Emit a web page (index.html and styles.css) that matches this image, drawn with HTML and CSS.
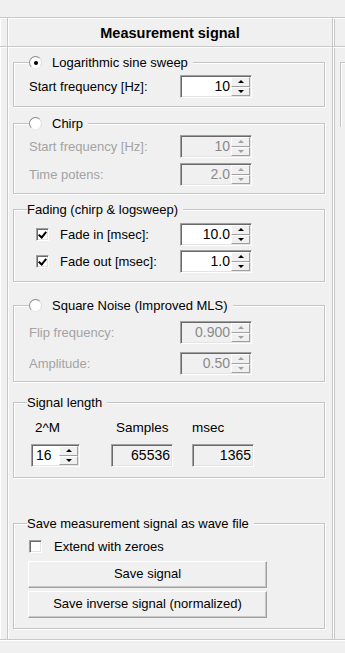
FILE: index.html
```html
<!DOCTYPE html>
<html>
<head>
<meta charset="utf-8">
<link rel="stylesheet" href="styles.css">
</head>
<body>
<div class="top"></div>
<div class="grid">
  <div class="cell cl"></div>
  <div class="cell cm head">Measurement signal</div>
  <div class="cell cr"></div>

  <div class="cell cl"></div>
  <div class="cell cm body">
    <fieldset class="grp g1">
      <legend><span class="lg"><span class="radio on"></span>Logarithmic sine sweep</span></legend>
      <div class="rows">
        <div class="row"><span class="lbl">Start frequency [Hz]:</span>
          <div class="spin"><div class="val">10</div><div class="btns"><span class="up"></span><span class="dn"></span></div></div>
        </div>
      </div>
    </fieldset>

    <fieldset class="grp g2">
      <legend><span class="lg"><span class="radio"></span>Chirp</span></legend>
      <div class="rows">
        <div class="row dis"><span class="lbl">Start frequency [Hz]:</span>
          <div class="spin off"><div class="val">10</div><div class="btns"><span class="up"></span><span class="dn"></span></div></div>
        </div>
        <div class="row dis"><span class="lbl">Time potens:</span>
          <div class="spin off"><div class="val">2.0</div><div class="btns"><span class="up"></span><span class="dn"></span></div></div>
        </div>
      </div>
    </fieldset>

    <fieldset class="grp g3 txt">
      <legend><span class="lg">Fading (chirp &amp; logsweep)</span></legend>
      <div class="rows">
        <div class="row"><span class="chk on"></span><span class="lbl2">Fade in [msec]:</span>
          <div class="spin"><div class="val">10.0</div><div class="btns"><span class="up"></span><span class="dn"></span></div></div>
        </div>
        <div class="row"><span class="chk on"></span><span class="lbl2">Fade out [msec]:</span>
          <div class="spin"><div class="val">1.0</div><div class="btns"><span class="up"></span><span class="dn"></span></div></div>
        </div>
      </div>
    </fieldset>

    <fieldset class="grp g4">
      <legend><span class="lg"><span class="radio"></span>Square Noise (Improved MLS)</span></legend>
      <div class="rows">
        <div class="row dis"><span class="lbl">Flip frequency:</span>
          <div class="spin off"><div class="val">0.900</div><div class="btns"><span class="up"></span><span class="dn"></span></div></div>
        </div>
        <div class="row dis"><span class="lbl">Amplitude:</span>
          <div class="spin off"><div class="val">0.50</div><div class="btns"><span class="up"></span><span class="dn"></span></div></div>
        </div>
      </div>
    </fieldset>

    <fieldset class="grp g5 txt">
      <legend><span class="lg">Signal length</span></legend>
      <div class="slgrid">
        <span class="h1">2^M</span>
        <span class="h2">Samples</span>
        <span class="h3">msec</span>
        <div class="spin small"><div class="val left">16</div><div class="btns"><span class="up"></span><span class="dn"></span></div></div>
        <div class="box">65536</div>
        <div class="box">1365</div>
      </div>
    </fieldset>

    <fieldset class="grp g6 txt">
      <legend><span class="lg">Save measurement signal as wave file</span></legend>
      <div class="row crow"><span class="chk"></span><span>Extend with zeroes</span></div>
      <div class="btn b1">Save signal</div>
      <div class="btn b2">Save inverse signal (normalized)</div>
    </fieldset>
  </div>
  <div class="cell cr"><div class="stub"></div></div>
</div>
</body>
</html>
```

FILE: styles.css
```css
html, body {
  margin: 0;
  padding: 0;
  background: #f0f0f0;
}
body {
  width: 345px;
  height: 653px;
  overflow: hidden;
  font-family: "Liberation Sans", Arial, sans-serif;
  font-size: 13px;
  color: #000;
}
.top { height: 17px; }

.grid {
  display: grid;
  grid-template-columns: 8px 325px 12px;
  grid-template-rows: 29px 593px;
  border-top: 1px solid #c8c8c8;
  box-shadow: 0 1px 0 #fff;
}
.cell {
  box-sizing: border-box;
  border-right: 1px solid #c8c8c8;
  border-bottom: 1px solid #c8c8c8;
  box-shadow: inset 1px 1px 0 #fff;
}
.cr {
  border-right: none;
  box-shadow: inset 1px 1px 0 #fff, inset 2px 0 0 #c8c8c8;
}
.head {
  display: flex;
  align-items: center;
  justify-content: center;
  padding-top: 2px;
  font-weight: bold;
  font-size: 14.5px;
}
.body {
  padding: 8px 0 0 5px;
}

/* group boxes */
.grp {
  box-sizing: border-box;
  width: 312px;
  margin: 0;
  min-width: 0;
  border: 1px solid #c4c4c4;
  box-shadow: inset 1px 1px 0 #fff, 1px 1px 0 #fff;
  padding: 0 0 8px 15px;
}
.grp legend {
  padding: 0 5px 0 0;
  height: 15px;
  background: #f0f0f0;
}
.grp.txt legend { margin-left: -2px; }
.lg {
  display: flex;
  align-items: center;
  height: 15px;
  line-height: 15px;
  white-space: nowrap;
}
.rows {
  display: flex;
  flex-direction: column;
}
.row {
  display: flex;
  align-items: center;
  height: 23px;
}
.lbl { width: 151px; white-space: nowrap; }
.lbl2 { width: 120px; white-space: nowrap; }
.dis .lbl { color: #a3a3a3; }

.g1 { padding-top: 5px; padding-bottom: 8px; }
.g2 { margin-top: 9px; padding-top: 4px; padding-bottom: 7px; }
.g2 .rows { gap: 5px; }
.g3 { margin-top: 8px; padding-top: 6px; padding-bottom: 8px; }
.g3 .rows { gap: 4px; }
.g4 { margin-top: 16px; padding-top: 8px; padding-bottom: 6px; }
.g4 .rows { gap: 8px; }
.g5 { margin-top: 13px; padding-top: 9px; padding-bottom: 10px; }
.g6 { margin-top: 38px; padding-top: 7px; padding-bottom: 10px; }

/* radio */
.radio {
  box-sizing: border-box;
  width: 13px;
  height: 13px;
  border-radius: 50%;
  background: #fff;
  border: 1px solid;
  border-color: #8c8c8c #dcdcdc #e8e8e8 #8c8c8c;
  margin-right: 10px;
  display: flex;
  align-items: center;
  justify-content: center;
}
.radio.on::after {
  content: "";
  width: 4px;
  height: 4px;
  border-radius: 50%;
  background: #000;
}

/* checkbox */
.chk {
  box-sizing: border-box;
  width: 13px;
  height: 13px;
  flex: none;
  background: #fff;
  border: 1px solid;
  border-color: #a0a0a0 #fff #fff #a0a0a0;
  box-shadow: inset 1px 1px 0 #696969, inset -1px -1px 0 #e3e3e3;
  margin-left: 7px;
  margin-right: 11px;
  position: relative;
}
.chk.on::after {
  content: "";
  position: absolute;
  left: 3px;
  top: 1px;
  width: 3px;
  height: 6px;
  border: solid #000;
  border-width: 0 2px 2px 0;
  transform: rotate(40deg);
}
.crow { height: 16px; }
.crow .chk { margin-left: 0; margin-right: 12px; }

/* spin edit */
.spin {
  box-sizing: border-box;
  display: flex;
  width: 72px;
  height: 23px;
  border: 1px solid;
  border-color: #a0a0a0 #fff #fff #a0a0a0;
  box-shadow: inset 1px 1px 0 #696969, inset -1px -1px 0 #e3e3e3;
  background: #fff;
  padding: 1px 1px 1px 1px;
  flex: none;
}
.spin .val {
  flex: 1;
  text-align: right;
  padding-right: 1px;
  line-height: 19px;
  font-size: 14px;
}
.spin .val.left { text-align: left; padding-left: 3px; }
.spin.off { background: #f0f0f0; }
.spin.off .val { color: #8a8a8a; }
.btns {
  width: 19px;
  display: flex;
  flex-direction: column;
}
.btns span {
  flex: 1;
  box-sizing: border-box;
  background: #f0f0f0;
  border: 1px solid;
  border-color: #fff #a0a0a0 #a0a0a0 #fff;
  display: flex;
  align-items: center;
  justify-content: center;
}
.btns .up::after {
  content: "";
  border-left: 3px solid transparent;
  border-right: 3px solid transparent;
  border-bottom: 3px solid #000;
}
.btns .dn::after {
  content: "";
  border-left: 3px solid transparent;
  border-right: 3px solid transparent;
  border-top: 3px solid #000;
}
.spin.off .btns .up::after { border-bottom-color: #a0a0a0; }
.spin.off .btns .dn::after { border-top-color: #a0a0a0; }

/* signal length */
.slgrid {
  display: grid;
  grid-template-columns: 80px 81px 62px;
  grid-template-rows: 16px 23px;
  row-gap: 9px;
  margin-left: 2px;
  align-items: center;
  font-size: 13.5px;
}
.h1 { padding-left: 4px; }
.h2 { padding-left: 5px; }
.spin.small { width: 49px; }
.box {
  box-sizing: border-box;
  width: 62px;
  height: 23px;
  border: 1px solid;
  border-color: #a0a0a0 #fff #fff #a0a0a0;
  box-shadow: inset 1px 1px 0 #696969, inset -1px -1px 0 #e3e3e3;
  background: #f0f0f0;
  text-align: right;
  padding-right: 2px;
  line-height: 21px;
  font-size: 14px;
}

/* buttons */
.btn {
  box-sizing: border-box;
  width: 239px;
  height: 27px;
  margin-left: -1px;
  text-align: center;
  line-height: 24px;
  background: #f0f0f0;
  border: 1px solid;
  border-color: #fff #a0a0a0 #a0a0a0 #fff;
  box-shadow: inset -1px -1px 0 #c8c8c8;
  font-size: 13px;
}
.b1 { margin-top: 7px; }
.b2 { margin-top: 3px; }

/* neighbour column stub */
.stub {
  margin: 15px 0 0 7px;
  height: 64px;
  border-left: 1px solid #c4c4c4;
  border-top: 1px solid #c4c4c4;
  box-shadow: inset 1px 1px 0 #fff;
}
```
